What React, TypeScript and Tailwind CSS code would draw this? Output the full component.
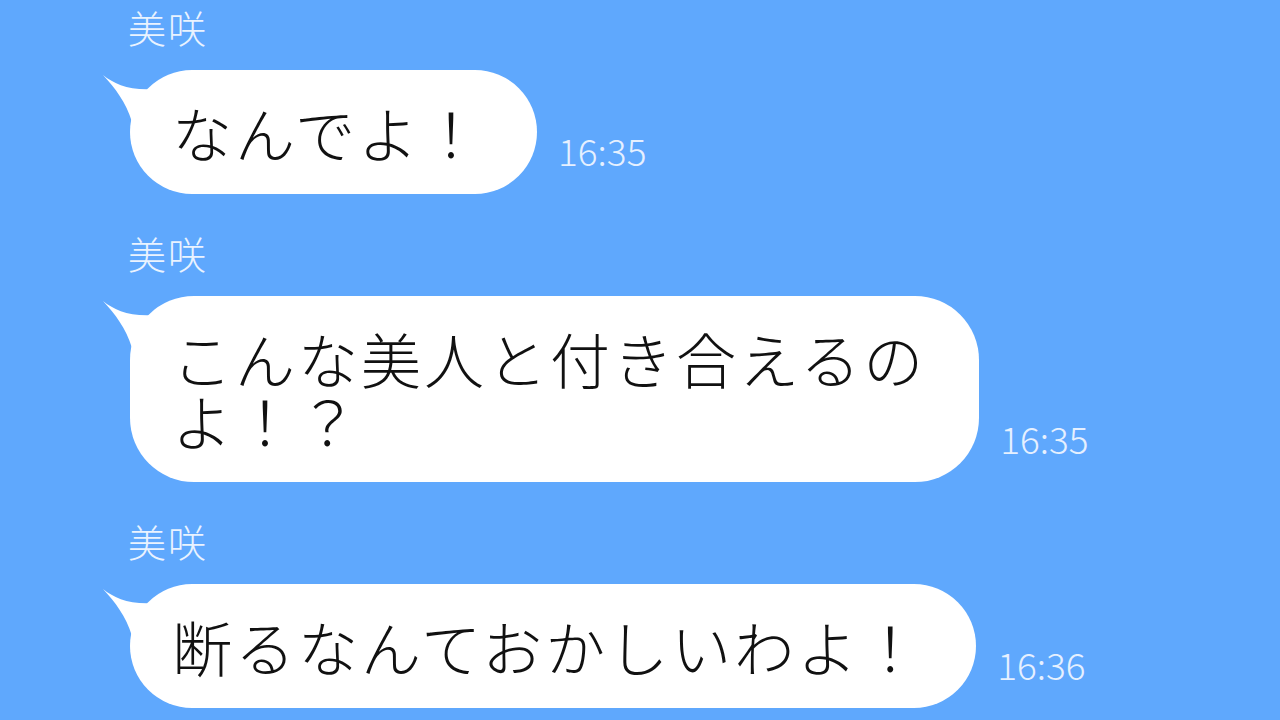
import React from "react";

const jp = { fontFamily: '"Noto Sans CJK JP", "Noto Sans", sans-serif' };

function Tail() {
  return (
    <svg
      className="absolute left-[-30px] top-0"
      width="70"
      height="70"
      viewBox="0 0 70 70"
    >
      <path
        d="M3 5 C 14 14 30 21 55 19 L 55 60 L 32 52 C 26 32 15 18 3 5 Z"
        fill="#ffffff"
      />
    </svg>
  );
}

function Message({
  lines,
  time,
  first,
}: {
  lines: string[];
  time: string;
  first?: boolean;
}) {
  return (
    <div className={first ? "flex flex-col" : "mt-[40px] flex flex-col"}>
      <div
        className="text-[38px] leading-[38px] font-light text-[#eaf3ff] tracking-[2px]"
        style={jp}
      >
        美咲
      </div>
      <div className="mt-[24px] flex items-end">
        <div className="relative ml-[2px]">
          <Tail />
          <div
            className="relative rounded-[64px] bg-white pl-[42px] pr-[53px] py-[31px] text-[60px] leading-[62px] tracking-[3px] text-[#111111] font-light"
            style={jp}
          >
            {lines.map((l, i) => (
              <div key={i} className="whitespace-nowrap">
                {l}
              </div>
            ))}
          </div>
        </div>
        <div
          className="ml-[21px] mb-[25px] text-[37px] leading-[37px] font-light text-[#e6f0ff]"
          style={jp}
        >
          {time}
        </div>
      </div>
    </div>
  );
}

export default function App() {
  return (
    <div className="w-[1280px] h-[720px] overflow-hidden bg-[#5fa8fd] pl-[128px] pt-[8px]">
      <Message first lines={["なんでよ！"]} time="16:35" />
      <Message lines={["こんな美人と付き合えるの", "よ！？"]} time="16:35" />
      <Message lines={["断るなんておかしいわよ！"]} time="16:36" />
    </div>
  );
}
